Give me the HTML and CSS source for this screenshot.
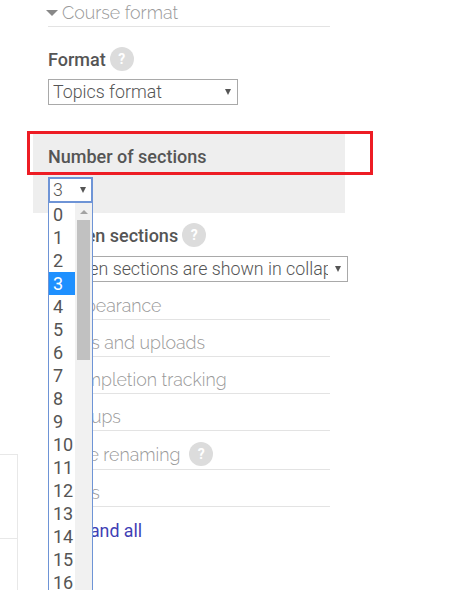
FILE: index.html
```html
<!DOCTYPE html>
<html lang="en">
  <head>
    <meta charset="UTF-8" />
    <meta name="viewport" content="width=device-width, initial-scale=1.0" />
    <title>Course settings</title>
    <link rel="stylesheet" href="styles.css">
  </head>
  <body>
    <div class="page">
      <div class="side-block">
        <div class="side-row"></div>
      </div>

      <div class="settings">
        <h3 class="section-title first"><span class="caret"></span>Course format</h3>

        <div class="field format-field">
          <div class="field-label">Format <span class="help">?</span></div>
          <div class="select select-format">
            <span class="select-text">Topics format</span>
            <span class="arrow"></span>
          </div>
        </div>

        <div class="highlighted">
          <div class="field-label">Number of sections</div>
          <div class="select select-number">
            <span class="select-text">3</span>
            <span class="arrow"></span>
            <div class="dropdown">
              <ul class="options">
                <li>0</li>
                <li>1</li>
                <li>2</li>
                <li class="selected">3</li>
                <li>4</li>
                <li>5</li>
                <li>6</li>
                <li>7</li>
                <li>8</li>
                <li>9</li>
                <li>10</li>
                <li>11</li>
                <li>12</li>
                <li>13</li>
                <li>14</li>
                <li>15</li>
                <li>16</li>
              </ul>
              <div class="scrollbar">
                <span class="scroll-up"></span>
                <span class="scroll-thumb"></span>
              </div>
            </div>
          </div>
        </div>

        <div class="field hidden-field">
          <div class="field-label">Hidden sections <span class="help">?</span></div>
          <div class="select select-hidden">
            <span class="select-text">Hidden sections are shown in collapsed form</span>
            <span class="arrow"></span>
          </div>
        </div>

        <h3 class="section-title"><span class="caret-closed"></span>Appearance</h3>
        <h3 class="section-title"><span class="caret-closed"></span>Files and uploads</h3>
        <h3 class="section-title"><span class="caret-closed"></span>Completion tracking</h3>
        <h3 class="section-title"><span class="caret-closed"></span>Groups</h3>
        <h3 class="section-title renaming"><span class="caret-closed"></span>Role renaming <span class="help">?</span></h3>
        <h3 class="section-title"><span class="caret-closed"></span>Tags</h3>

        <a class="expand" href="#">Expand all</a>
      </div>

      <div class="red-box"></div>
    </div>
  </body>
</html>
```

FILE: styles.css
```css
html,
body {
  margin: 0;
  height: 590px;
  overflow: hidden;
  background-color: white;
}
body {
  font-family: Roboto, "Liberation Sans", sans-serif;
  font-size: 17.8px;
  color: #555;
}
.page {
  position: relative;
  display: flex;
  height: 590px;
}
.side-block {
  width: 17px;
  height: 136px;
  margin-top: 454px;
  border-top: 1px solid #e8e8e8;
  border-right: 1px solid #e8e8e8;
}
.side-row {
  height: 83px;
  border-bottom: 1px solid #e8e8e8;
}
.settings {
  width: 282px;
  margin-left: 30px;
}
.section-title {
  display: flex;
  align-items: center;
  height: 28px;
  margin: 0;
  padding-top: 8px;
  border-bottom: 1px solid #e3e3e3;
  font-family: Raleway, Lato, sans-serif;
  font-size: 17.8px;
  font-weight: 300;
  color: #999;
}
.section-title.first {
  height: 25px;
  padding-top: 0;
  padding-bottom: 1px;
}
.section-title.renaming {
  height: 30px;
}
.section-title .help {
  margin-left: 9px;
}
.caret {
  width: 0;
  height: 0;
  margin-left: -2px;
  margin-right: 4px;
  border-left: 6px solid transparent;
  border-right: 6px solid transparent;
  border-top: 6px solid #888;
}
.caret-closed {
  width: 0;
  height: 0;
  margin-left: 2px;
  margin-right: 6px;
  border-top: 5px solid transparent;
  border-bottom: 5px solid transparent;
  border-left: 6px solid #888;
}
.field-label {
  display: flex;
  align-items: center;
  height: 24px;
  font-size: 18px;
  font-weight: 500;
  color: #555;
}
.help {
  display: inline-flex;
  align-items: center;
  justify-content: center;
  width: 24px;
  height: 24px;
  margin-left: 4px;
  border-radius: 50%;
  background-color: #dcdcdc;
  color: white;
  font-family: Roboto, sans-serif;
  font-size: 14px;
  font-weight: 700;
}
.format-field {
  padding-top: 20px;
  height: 106px;
  box-sizing: border-box;
}
.select {
  position: relative;
  display: flex;
  align-items: center;
  box-sizing: border-box;
  height: 26px;
  border: 1px solid #a9a9a9;
  background-color: white;
  font-weight: 300;
  color: #555;
}
.select-text {
  flex: 1;
  margin-left: 4px;
  margin-bottom: 2px;
  overflow: hidden;
  white-space: nowrap;
}
.arrow {
  width: 0;
  height: 0;
  margin: 0 6px 0 7px;
  border-left: 3.5px solid transparent;
  border-right: 3.5px solid transparent;
  border-top: 6px solid #555;
}
.select-format {
  width: 190px;
  margin-top: 8px;
}
.highlighted {
  width: 312px;
  height: 80px;
  box-sizing: border-box;
  margin-left: -15px;
  padding: 11px 15px 0;
  background-color: #eee;
}
.select-number {
  width: 45px;
  margin-top: 9px;
  border: 1px solid #6e94d6;
  box-shadow: 0 0 0 1px #6e94d6 inset;
}
.dropdown {
  position: absolute;
  top: 24px;
  left: -1px;
  display: flex;
  width: 45px;
  height: 420px;
  box-sizing: border-box;
  border: 1px solid #6e94d6;
  background-color: white;
  z-index: 2;
}
.options {
  width: 26px;
  margin: 0;
  padding: 0;
  list-style: none;
  font-size: 18px;
  font-weight: 400;
}
.options li {
  height: 23px;
  padding-left: 4px;
  line-height: 24px;
}
.options .selected {
  background-color: #1e90ff;
  color: white;
}
.scrollbar {
  position: relative;
  width: 17px;
  background-color: #f1f1f1;
}
.scroll-up {
  position: absolute;
  top: 7px;
  left: 5px;
  border-left: 4px solid transparent;
  border-right: 4px solid transparent;
  border-bottom: 4px solid #a3a3a3;
}
.scroll-thumb {
  position: absolute;
  top: 17px;
  left: 2px;
  width: 13px;
  height: 140px;
  background-color: #c1c1c1;
}
.hidden-field {
  height: 70px;
  box-sizing: border-box;
  padding-top: 10px;
}
.select-hidden {
  width: 300px;
  margin-top: 9px;
}
.expand {
  display: block;
  margin-top: 13px;
  margin-left: 13px;
  color: #3f3fb5;
  text-decoration: none;
}
.red-box {
  position: absolute;
  top: 131px;
  left: 27px;
  width: 346px;
  height: 44px;
  box-sizing: border-box;
  border: 3px solid #ed1c24;
  z-index: 1;
}
```
